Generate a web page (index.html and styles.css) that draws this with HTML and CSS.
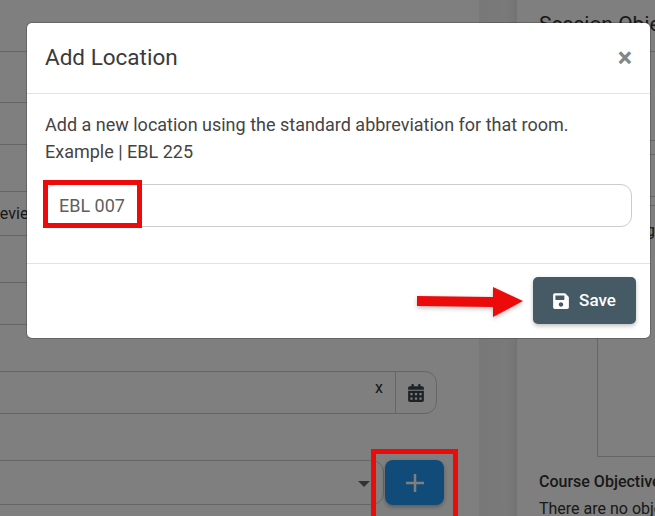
FILE: index.html
```html
<!DOCTYPE html>
<html lang="en">
<head>
    <meta charset="UTF-8">
    <meta name="viewport" content="width=device-width, initial-scale=1.0">
    <title>Add Location</title>
    <link rel="stylesheet" href="styles.css">
</head>
<body>
    <div class="page">
        <div class="left-col">
            <div class="row r1"></div>
            <div class="row r2"></div>
            <div class="row r3"></div>
            <div class="row r4"></div>
            <div class="row r5"><span class="row-text">Review</span></div>
            <div class="row r6"></div>
            <div class="row r7"></div>
            <div class="date-group">
                <div class="date-input"><span class="clear-x">x</span></div>
                <div class="date-addon">
                    <svg class="cal-icon" viewBox="0 0 448 512"><path d="M0 464c0 26.5 21.5 48 48 48h352c26.5 0 48-21.5 48-48V192H0v272zm320-196c0-6.6 5.4-12 12-12h40c6.6 0 12 5.4 12 12v40c0 6.6-5.4 12-12 12h-40c-6.6 0-12-5.4-12-12v-40zm0 128c0-6.6 5.4-12 12-12h40c6.6 0 12 5.4 12 12v40c0 6.6-5.4 12-12 12h-40c-6.6 0-12-5.4-12-12v-40zM192 268c0-6.6 5.4-12 12-12h40c6.6 0 12 5.4 12 12v40c0 6.6-5.4 12-12 12h-40c-6.6 0-12-5.4-12-12v-40zm0 128c0-6.6 5.4-12 12-12h40c6.6 0 12 5.4 12 12v40c0 6.6-5.4 12-12 12h-40c-6.6 0-12-5.4-12-12v-40zM64 268c0-6.6 5.4-12 12-12h40c6.6 0 12 5.4 12 12v40c0 6.6-5.4 12-12 12H76c-6.6 0-12-5.4-12-12v-40zm0 128c0-6.6 5.4-12 12-12h40c6.6 0 12 5.4 12 12v40c0 6.6-5.4 12-12 12H76c-6.6 0-12-5.4-12-12v-40zM400 64h-48V16c0-8.8-7.2-16-16-16h-32c-8.8 0-16 7.2-16 16v48H160V16c0-8.8-7.2-16-16-16h-32c-8.8 0-16 7.2-16 16v48H48C21.5 64 0 85.5 0 112v48h448v-48c0-26.5-21.5-48-48-48z"/></svg>
                </div>
            </div>
            <div class="select-group">
                <div class="select-box"><span class="caret"></span></div>
                <button class="add-btn">
                    <svg class="plus-icon" viewBox="0 0 18 18"><path d="M9 0v18M0 9h18"/></svg>
                </button>
            </div>
        </div>
        <div class="gutter"></div>
        <div class="right-col">
            <h2 class="session-title">Session Objectives</h2>
            <div class="obj-row h1"></div>
            <div class="obj-row h2"></div>
            <div class="obj-row h3"></div>
            <div class="obj-row h4"></div>
            <div class="obj-text">Engaging</div>
            <div class="obj-box"></div>
            <h3 class="course-title">Course Objectives</h3>
            <p class="course-text">There are no objectives</p>
        </div>
    </div>

    <div class="backdrop"></div>

    <div class="modal">
        <div class="modal-header">
            <h4 class="modal-title">Add Location</h4>
            <span class="close">×</span>
        </div>
        <div class="modal-body">
            <p class="help">Add a new location using the standard abbreviation for that room.<br>Example | EBL 225</p>
            <input class="location-input" type="text" value="EBL 007">
        </div>
        <div class="modal-footer">
            <button class="save-btn">
                <svg class="save-icon" viewBox="0 0 448 512"><path d="M433.941 129.941l-83.882-83.882A48 48 0 0 0 316.118 32H48C21.49 32 0 53.49 0 80v352c0 26.51 21.49 48 48 48h352c26.51 0 48-21.49 48-48V163.882a48 48 0 0 0-14.059-33.941zM224 416c-35.346 0-64-28.654-64-64 0-35.346 28.654-64 64-64s64 28.654 64 64c0 35.346-28.654 64-64 64zm96-304.52V212c0 6.627-5.373 12-12 12H76c-6.627 0-12-5.373-12-12V108c0-6.627 5.373-12 12-12h228.52c3.183 0 6.235 1.264 8.485 3.515l3.48 3.48A11.996 11.996 0 0 1 320 111.48z"/></svg>
                <span class="save-label">Save</span>
            </button>
        </div>
    </div>

    <!-- red annotations on top of the screenshot -->
    <div class="mark mark-input"></div>
    <div class="mark mark-add"></div>
    <svg class="arrow" viewBox="0 0 110 34"><polygon points="1,10 77,11 77,1 107,15 77,31 77,21 1,20"/></svg>
</body>
</html>
```

FILE: styles.css
```css
* {
    box-sizing: border-box;
}
html, body {
    margin: 0;
    height: 100%;
    overflow: hidden;
}
body {
    position: relative;
    font-family: Roboto, "Liberation Sans", sans-serif;
    font-size: 16px;
    color: #333;
    background-color: white;
}
.page {
    display: flex;
    height: 516px;
}
.left-col {
    width: 479px;
    flex: none;
    padding-right: 42px;
}
.row {
    border-bottom: 1px solid #ccc;
    display: flex;
    align-items: center;
}
.r1 { height: 52px; }
.r2 { height: 51px; }
.r3 { height: 42px; }
.r4 { height: 47px; }
.r5 { height: 44px; }
.r6 { height: 47px; }
.r7 { height: 42px; }
.row-text {
    margin-left: -10px;
}
.date-group {
    display: flex;
    height: 43px;
    margin-top: 46px;
    margin-left: -10px;
    border: 1px solid #ccc;
    border-radius: 0 12px 12px 0;
}
.date-input {
    flex: 1;
    text-align: right;
    padding: 6px 12px 0 0;
    font-size: 16px;
}
.date-addon {
    width: 41px;
    border-left: 1px solid #ccc;
    display: flex;
    align-items: center;
    justify-content: center;
}
.cal-icon {
    width: 16px;
    height: 18px;
    fill: #37474f;
}
.select-group {
    display: flex;
    margin-top: 46px;
    margin-right: -7px;
}
.select-box {
    flex: 1;
    height: 45px;
    margin-left: -10px;
    border: 1px solid #ccc;
    border-radius: 0 12px 12px 0;
    display: flex;
    align-items: center;
    justify-content: flex-end;
    padding-right: 13px;
}
.caret {
    border-top: 6px solid #666;
    border-left: 6px solid transparent;
    border-right: 6px solid transparent;
    margin-top: 2px;
}
.add-btn {
    width: 59px;
    height: 45px;
    margin-left: 1px;
    border: none;
    border-radius: 8px;
    background-color: #2196f3;
    box-shadow: 0 2px 4px rgba(0, 0, 0, .3);
    display: flex;
    align-items: center;
    justify-content: center;
}
.plus-icon {
    width: 18px;
    height: 18px;
    stroke: white;
    stroke-width: 2.5;
    fill: none;
}
.gutter {
    width: 37px;
    flex: none;
    background: linear-gradient(90deg, #f0f0f0, #f4f4f4 70%, #eaeaea);
}
.right-col {
    flex: 1;
    min-width: 0;
    padding-left: 22px;
    border-left: 1px solid #e4e4e4;
    white-space: nowrap;
}
.session-title {
    margin: 0;
    padding-top: 12px;
    height: 52px;
    font-size: 21px;
    font-weight: 400;
    border-bottom: 1px solid #ccc;
    margin-right: -30px;
}
.obj-row {
    border-bottom: 1px solid #ccc;
    margin-right: -30px;
}
.h1 { height: 89px; }
.h2 { height: 14px; }
.h3 { height: 42px; }
.h4 { height: 9px; }
.obj-text {
    text-align: right;
    margin-top: 15px;
    height: 20px;
}
.obj-box {
    height: 216px;
    margin-left: 58px;
    margin-right: -30px;
    border-left: 1px solid #ccc;
    border-bottom: 1px solid #ccc;
}
.course-title {
    margin: 15px 0 0;
    font-size: 16px;
    font-weight: 500;
}
.course-text {
    margin: 8px 0 0;
}
.backdrop {
    position: absolute;
    inset: 0;
    background-color: rgba(0, 0, 0, .5);
}
.modal {
    position: absolute;
    left: 27px;
    top: 23px;
    width: 623px;
    height: 315px;
    background-color: white;
    border-radius: 5px;
    box-shadow: 0 0 0 1px rgba(0, 0, 0, .2);
    display: flex;
    flex-direction: column;
}
.modal-header {
    height: 71px;
    display: flex;
    align-items: center;
    justify-content: space-between;
    padding: 0 18px;
    border-bottom: 1px solid #e3e3e3;
}
.modal-title {
    margin: 0 0 2px;
    font-size: 22.5px;
    font-weight: 400;
    color: #3a3a3a;
}
.close {
    font-size: 27px;
    font-weight: 700;
    color: #858585;
    line-height: 1;
    margin-right: 0;
}
.modal-body {
    height: 170px;
    padding: 17px 18px 0;
    border-bottom: 1px solid #e3e3e3;
}
.help {
    margin: 0;
    font-size: 18px;
    line-height: 27px;
    color: #444;
}
.location-input {
    display: block;
    width: 587px;
    height: 43px;
    margin-top: 19px;
    padding: 0 13px;
    border: 1px solid #ccc;
    border-radius: 11px;
    font-family: inherit;
    font-size: 18px;
    color: #5f5f5f;
    outline: none;
}
.modal-footer {
    flex: 1;
    padding: 13px 14px 0 0;
    display: flex;
    justify-content: flex-end;
    align-items: flex-start;
}
.save-btn {
    display: flex;
    align-items: center;
    justify-content: center;
    gap: 10px;
    width: 103px;
    height: 47px;
    border: none;
    border-radius: 5px;
    background-color: #455a64;
    color: white;
    font-family: inherit;
    font-size: 17px;
    font-weight: 500;
    box-shadow: 0 2px 4px rgba(0, 0, 0, .25);
}
.save-label {
    margin-bottom: 2px;
}
.save-icon {
    width: 16px;
    height: 18px;
    fill: white;
}
.mark {
    position: absolute;
    border: 5px solid #ec0a0a;
}
.mark-input {
    left: 43px;
    top: 180px;
    width: 99px;
    height: 48px;
}
.mark-add {
    left: 371px;
    top: 449px;
    width: 87px;
    height: 72px;
}
.arrow {
    position: absolute;
    left: 416px;
    top: 286px;
    width: 110px;
    height: 34px;
    fill: #ec0a0a;
    filter: drop-shadow(0 2px 2px rgba(0, 0, 0, .25));
}
```
